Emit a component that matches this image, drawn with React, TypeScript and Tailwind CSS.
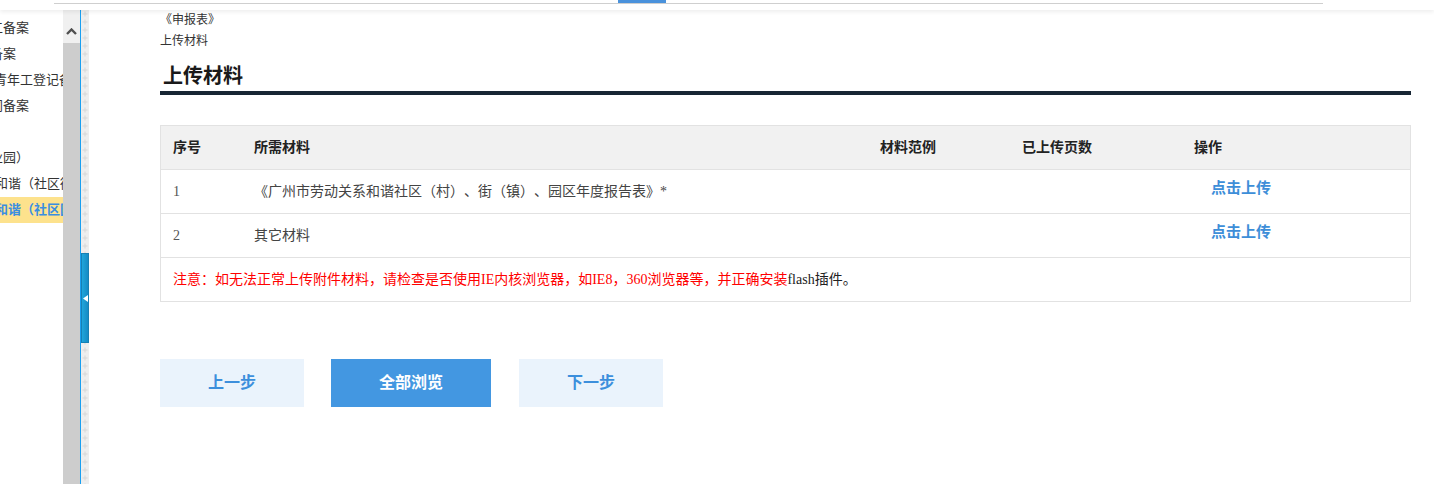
import type { ReactNode } from "react"

const sans = "font-['Liberation_Sans','Noto_Sans_CJK_SC',sans-serif]"
const serif = "font-['Liberation_Serif','Noto_Sans_CJK_SC',serif]"

const menuItems: { text: string; offset: string; active?: boolean }[] = [
  { text: "劳动用工备案", offset: "ml-[-49px]" },
  { text: "劳动用工备案", offset: "ml-[-62px]" },
  { text: "外来青年工登记备案", offset: "ml-[-32px]" },
  { text: "劳动合同备案", offset: "ml-[-49px]" },
  { text: "", offset: "" },
  { text: "和谐（工业园）", offset: "ml-[-62px]" },
  { text: "劳动关系和谐（社区街道）", offset: "ml-[-57px]" },
  { text: "劳动关系和谐（社区园区）", offset: "ml-[-57px]", active: true },
]

const materials = [
  { no: "1", name: "《广州市劳动关系和谐社区（村）、街（镇）、园区年度报告表》*" },
  { no: "2", name: "其它材料" },
]

function Sidebar() {
  return (
    <div className={`w-[63px] shrink-0 overflow-hidden pt-[5px] text-[13px] text-[#333] ${sans}`}>
      {menuItems.map((item, i) => (
        <div
          key={i}
          className={`h-[26px] overflow-hidden whitespace-nowrap leading-[26px] ${
            item.active ? "bg-[#fde28d] font-semibold text-[#3a8ee0]" : ""
          }`}
        >
          <span className={`inline-block ${item.offset}`}>{item.text}</span>
        </div>
      ))}
    </div>
  )
}

function Scrollbar() {
  return (
    <div className="flex w-[17px] shrink-0 flex-col">
      <div className="flex h-[33px] justify-center bg-[#f0f0f0] pt-[18px]">
        <svg width="11" height="7" viewBox="0 0 11 7">
          <path d="M1 6 L5.5 1.5 L10 6" fill="none" stroke="#505050" strokeWidth="2.4" />
        </svg>
      </div>
      <div className="flex-1 bg-[#cdcdcd]" />
    </div>
  )
}

function Splitter() {
  return (
    <div className="relative flex shrink-0">
      <div className="w-px bg-[#1a9ff0]" />
      <svg className="h-full w-[8px]" aria-hidden>
        <defs>
          <pattern id="plus" width="8" height="8" patternUnits="userSpaceOnUse">
            <rect width="8" height="8" fill="#eeeeee" />
            <path d="M4 1.5 V6.5 M1.5 4 H6.5" stroke="#d6d6d6" strokeWidth="1" />
          </pattern>
        </defs>
        <rect width="100%" height="100%" fill="url(#plus)" />
      </svg>
      <div className="absolute left-[1px] top-[243px] flex h-[90px] w-[8px] items-center justify-center border border-[#1680b4] bg-gradient-to-r from-[#1fa6dc] to-[#168bc4]">
        <svg width="5" height="7" viewBox="0 0 5 7">
          <path d="M0 3.5 L5 0 L5 7 Z" fill="#ffffff" />
        </svg>
      </div>
    </div>
  )
}

function Cell({ children, className = "" }: { children?: ReactNode; className?: string }) {
  return <div className={`flex items-center px-[12px] ${className}`}>{children}</div>
}

function MaterialsTable() {
  const cols = "grid grid-cols-[81px_626px_142px_172px_1fr]"
  return (
    <div className="mt-[30px] border border-[#e2e2e2]">
      <div className={`${cols} h-[43px] bg-[#f1f1f1] text-[14px] font-bold text-[#222] ${sans}`}>
        <Cell>序号</Cell>
        <Cell>所需材料</Cell>
        <Cell>材料范例</Cell>
        <Cell>已上传页数</Cell>
        <Cell>操作</Cell>
      </div>
      {materials.map((m) => (
        <div
          key={m.no}
          className={`${cols} h-[44px] border-t border-[#e2e2e2] text-[14px] text-[#444] ${serif}`}
        >
          <Cell className="text-[#555]">{m.no}</Cell>
          <Cell>{m.name}</Cell>
          <Cell />
          <Cell />
          <div className="pl-[29px] pt-[8px]">
            <a
              href="#"
              className={`text-[15px] font-semibold leading-[20px] text-[#3d8ed8] ${sans}`}
            >
              点击上传
            </a>
          </div>
        </div>
      ))}
      <div
        className={`flex h-[44px] items-center border-t border-[#e2e2e2] px-[12px] text-[14px] text-[#ff0000] ${serif}`}
      >
        注意：如无法正常上传附件材料，请检查是否使用IE内核浏览器，如IE8，360浏览器等，并正确安装
        <span className="text-[#222]">flash插件。</span>
      </div>
    </div>
  )
}

export default function App() {
  return (
    <div className="flex h-[484px] w-[1434px] flex-col overflow-hidden bg-white [text-spacing-trim:space-all]">
      <div className="relative z-10 h-[10px] shrink-0 bg-white shadow-[0_2px_4px_rgba(0,0,0,0.07)]">
        <div className="ml-[54px] flex h-[4px] w-[1269px] border-b border-[#cfcfcf]">
          <div className="ml-[564px] h-full w-[48px] bg-[#4a92dc]" />
        </div>
      </div>

      <div className="flex min-h-0 flex-1">
        <Sidebar />
        <Scrollbar />
        <Splitter />

        <main className="flex-1 pl-[71px] pr-[23px]">
          <div className={`text-[12px] leading-[21px] text-[#333] ${sans}`}>
            <div>《申报表》</div>
            <div>上传材料</div>
          </div>
          <h1
            className={`mt-[10px] h-[29px] pl-[3px] text-[20px] font-bold leading-[29px] text-[#1a1a1a] ${sans}`}
          >
            上传材料
          </h1>
          <div className="h-[4px] bg-[#172634]" />

          <MaterialsTable />

          <div className={`mt-[57px] flex text-[16px] font-bold ${sans}`}>
            <button className="h-[48px] w-[144px] bg-[#eaf3fc] text-[#3c8fdc]">上一步</button>
            <button className="ml-[27px] h-[48px] w-[160px] bg-[#4397e1] text-white">
              全部浏览
            </button>
            <button className="ml-[28px] h-[48px] w-[144px] bg-[#eaf3fc] text-[#3c8fdc]">
              下一步
            </button>
          </div>
        </main>
      </div>
    </div>
  )
}
